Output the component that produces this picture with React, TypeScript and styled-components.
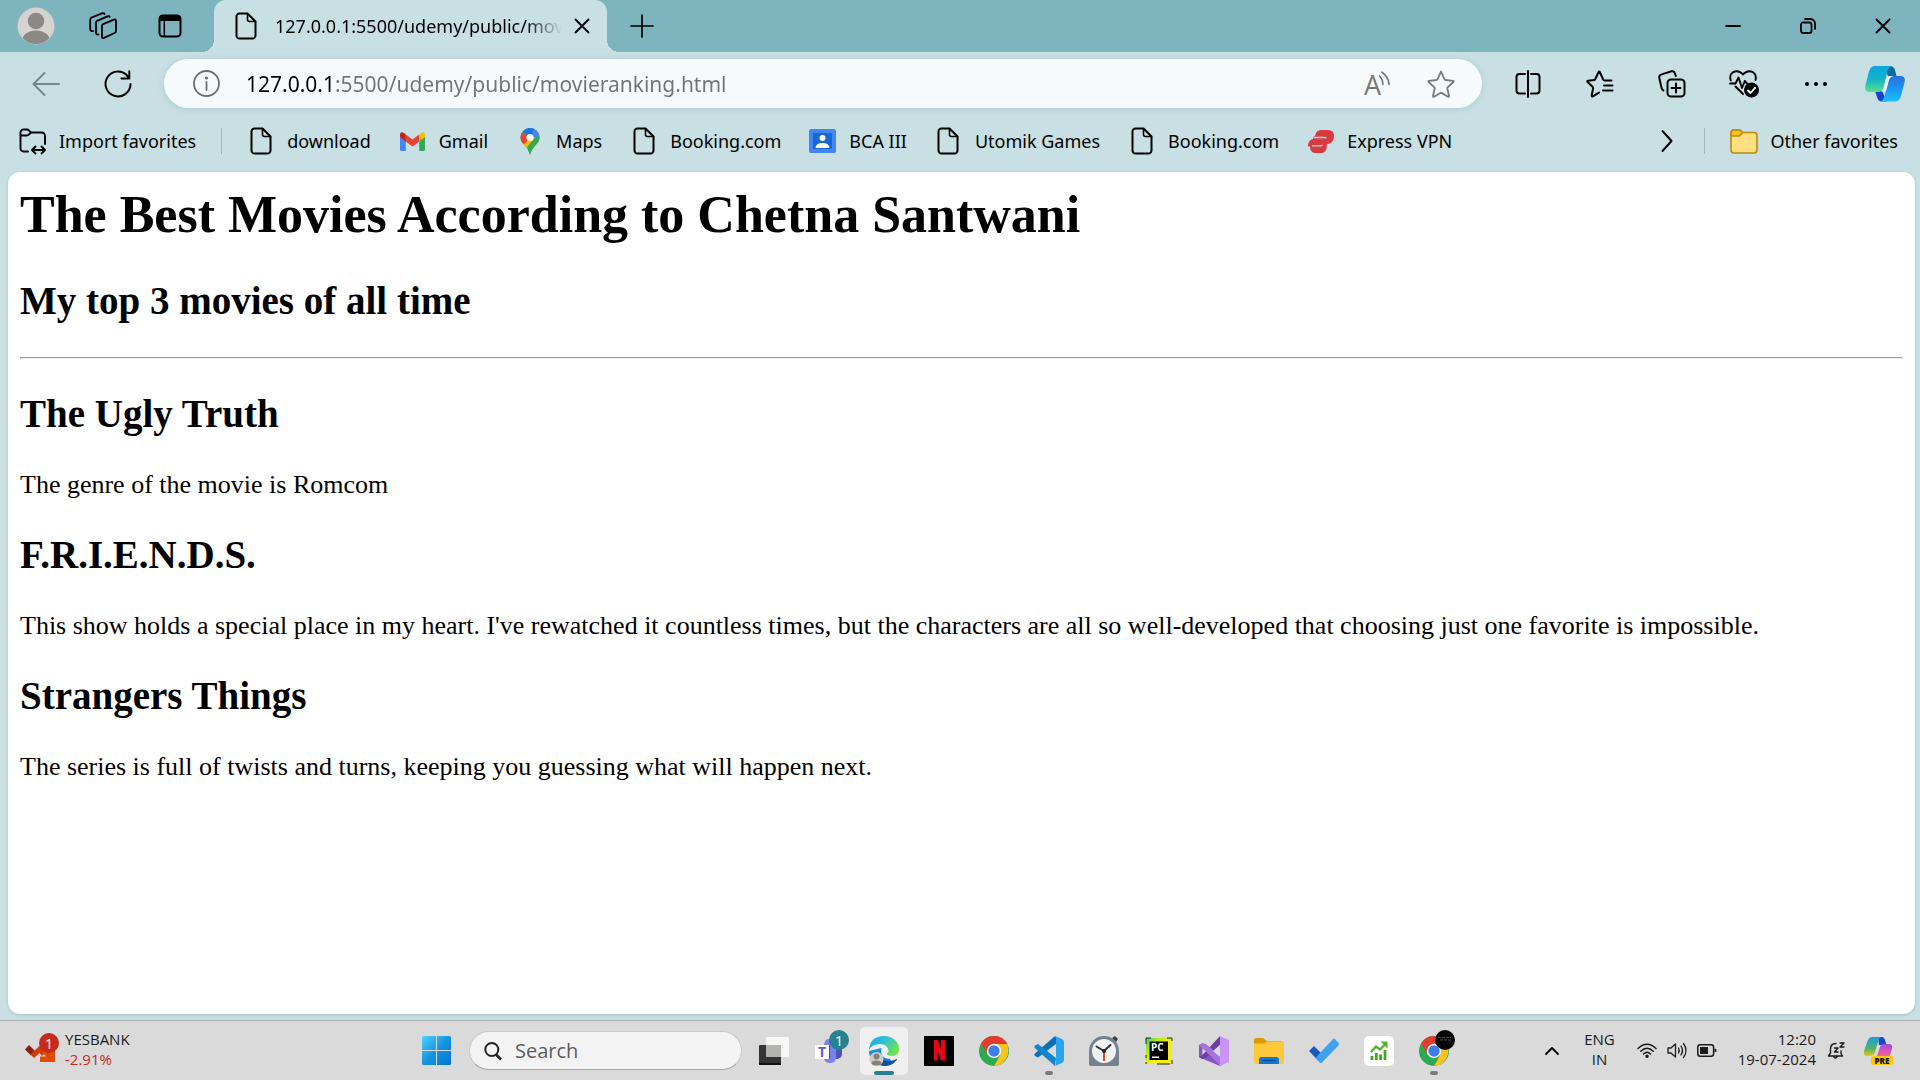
import React from "react";
import styled, { createGlobalStyle } from "styled-components";
import { RiNetflixFill } from "react-icons/ri";

const uiFont = `"Noto Sans", "Open Sans", sans-serif`;
const shellFont = `"Open Sans", "Noto Sans", sans-serif`;

const GlobalStyle = createGlobalStyle`
  *, *::before, *::after { box-sizing: border-box; }
  body { margin: 0; }
  svg { display: block; flex: none; overflow: visible; }
`;

/* ---------- shared ---------- */

const Desktop = styled.div`
  display: flex;
  flex-direction: column;
  min-height: 100vh;
  background: #c8dfe3;
  font-family: ${uiFont};
  color: #000;
`;

const IconButton = styled.button<{ $w: number; $color?: string }>`
  display: flex;
  align-items: center;
  justify-content: center;
  flex: none;
  align-self: stretch;
  width: ${(p) => p.$w}px;
  padding: 0;
  border: 0;
  background: none;
  color: ${(p) => p.$color ?? "#000"};
`;

/* ---------- tab strip ---------- */

const TabStrip = styled.header`
  display: flex;
  align-items: center;
  height: 52px;
  padding-left: 2px;
  background: #7eb4be;
`;

const Tab = styled.div`
  position: relative;
  display: flex;
  align-items: center;
  width: 393px;
  height: 52px;
  margin-left: 11px;
  padding: 0 4px 0 21px;
  border-radius: 12px 12px 0 0;
  background: #c8dfe3;

  &::before,
  &::after {
    content: "";
    position: absolute;
    bottom: 0;
    width: 12px;
    height: 12px;
  }
  &::before {
    left: -12px;
    background: radial-gradient(circle at 0 0, transparent 12px, #c8dfe3 12px);
  }
  &::after {
    right: -12px;
    background: radial-gradient(circle at 100% 0, transparent 12px, #c8dfe3 12px);
  }
`;

const TabTitle = styled.span`
  flex: 1;
  min-width: 0;
  margin-left: 18px;
  overflow: hidden;
  white-space: nowrap;
  font-size: 18px;
  line-height: 26px;
  mask-image: linear-gradient(to right, #000 250px, transparent 287px);
`;

const WindowControls = styled.div`
  display: flex;
  align-self: stretch;
  margin-left: auto;
`;

/* ---------- toolbar ---------- */

const Toolbar = styled.div`
  display: flex;
  align-items: center;
  height: 63px;
  padding: 0 2px 0 10px;
`;

const AddressBar = styled.div`
  display: flex;
  align-items: center;
  flex: 1;
  height: 49px;
  margin: 0 10px;
  padding: 0 9px 0 16px;
  border-radius: 25px;
  background: #f6fafb;
  box-shadow: 0 1px 6px #a9cbd1;
`;

const AddressInput = styled.input`
  flex: 1;
  min-width: 0;
  height: 32px;
  margin-left: 14px;
  padding: 0;
  border: 0;
  outline: 0;
  font-family: ${uiFont};
  font-size: 21px;
  line-height: 32px;
  color: transparent;
  background: linear-gradient(to right, #000 89px, #707476 89px);
  background-clip: text;
`;

/* ---------- favorites ---------- */

const FavoritesBar = styled.nav`
  display: flex;
  align-items: center;
  gap: 28px;
  height: 56px;
  padding: 0 22px 4px 19px;
`;

const Favorite = styled.a`
  display: flex;
  align-items: center;
  gap: 13px;
  color: #000;
  font-size: 18px;
  line-height: 26px;
  text-decoration: none;
  white-space: nowrap;
`;

const FavoriteIcon = styled.span`
  display: flex;
  justify-content: center;
  width: 27px;
`;

const Divider = styled.span`
  width: 1px;
  height: 26px;
  margin: 0 -3px;
  background: #9fb6ba;
`;

const FavoritesEnd = styled.div`
  display: flex;
  align-items: center;
  gap: 28px;
  margin-left: auto;
`;

/* ---------- web page ---------- */

const Page = styled.main`
  flex: 1;
  margin: 1px 5px 6px 8px;
  padding: 12px;
  border-radius: 12px;
  background: #fff;
  box-shadow: 0 1px 3px #a3c2c7;
  font-family: "Liberation Serif", "Times New Roman", serif;
`;

const Title = styled.h1`
  margin: 0 0 32px;
  font-size: 52px;
  line-height: 62px;
`;

const Heading = styled.h2`
  margin: 0 0 33px;
  font-size: 39px;
  line-height: 46px;
`;

const Rule = styled.hr`
  margin: 0 0 32px;
  border: 1px solid;
  border-color: #9a9a9a #eeeeee #eeeeee #9a9a9a;
`;

const Text = styled.p`
  margin: 0 0 32px;
  font-size: 26px;
  line-height: 30px;
`;

/* ---------- taskbar ---------- */

const Taskbar = styled.footer`
  display: grid;
  grid-template-columns: 1fr auto 1fr;
  height: 60px;
  border-top: 1px solid #a9afb0;
  background: #dadada;
  color: #1b1b1b;
  font-family: ${shellFont};
`;

const Widget = styled.button`
  display: flex;
  align-items: center;
  gap: 10px;
  padding: 0 0 0 25px;
  border: 0;
  background: none;
  color: inherit;
  font-family: inherit;
  text-align: left;
`;

const SmallLines = styled.span<{ $align?: string }>`
  display: flex;
  flex-direction: column;
  padding-bottom: 4px;
  font-size: 15px;
  line-height: 20px;
  text-align: ${(p) => p.$align ?? "left"};
`;

const Loss = styled.span`
  color: #c42b1c;
`;

const IconHolder = styled.span`
  position: relative;
  display: flex;
`;

const Badge = styled.span<{ $bg: string; $x: number; $y: number }>`
  position: absolute;
  left: ${(p) => p.$x}px;
  top: ${(p) => p.$y}px;
  width: 20px;
  height: 20px;
  border-radius: 50%;
  background: ${(p) => p.$bg};
  color: #fff;
  font-size: 15px;
  line-height: 20px;
  text-align: center;
`;

const Apps = styled.div`
  display: flex;
  align-items: center;
  padding-right: 50px;
`;

const SearchBox = styled.label`
  display: flex;
  align-items: center;
  gap: 13px;
  width: 273px;
  height: 39px;
  margin: 0 4px 0 5px;
  padding: 0 14px;
  border: 1px solid #c9c9c9;
  border-bottom-color: #a5a5a5;
  border-radius: 20px;
  background: #f3f3f3;
`;

const SearchInput = styled.input`
  flex: 1;
  min-width: 0;
  padding: 0;
  border: 0;
  outline: 0;
  background: none;
  font-family: inherit;
  font-size: 20px;
  line-height: 28px;

  &::placeholder {
    color: #5c5c5c;
    opacity: 1;
  }
`;

const AppButton = styled.button<{ $active?: boolean }>`
  position: relative;
  display: flex;
  align-items: center;
  justify-content: center;
  flex: none;
  width: 48px;
  height: 48px;
  margin: 0 3px 0 4px;
  padding: 0;
  border: 0;
  border-radius: 5px;
  background: ${(p) => (p.$active ? "#efefef" : "none")};
  font-family: inherit;
`;

const Running = styled.span<{ $active?: boolean }>`
  position: absolute;
  bottom: 0;
  width: ${(p) => (p.$active ? 20 : 8)}px;
  height: 4px;
  border-radius: 2px;
  background: ${(p) => (p.$active ? "#268290" : "#7b7b7b")};
`;

const NetflixTile = styled.span`
  display: flex;
  align-items: center;
  justify-content: center;
  width: 30px;
  height: 30px;
  background: #000;
  color: #e50914;
`;

const Tray = styled.div`
  display: flex;
  align-items: center;
  justify-content: flex-end;
  padding-right: 15px;
`;

const TrayText = styled.button`
  margin: 0 17px;
  padding: 0;
  border: 0;
  background: none;
  color: inherit;
  font-family: inherit;
`;

const Clock = styled(TrayText)`
  margin: 0 4px 0 16px;
`;

/* ---------- icons ---------- */

const line = (w: number) => ({
  fill: "none",
  stroke: "currentColor",
  strokeWidth: w,
  strokeLinecap: "round" as const,
  strokeLinejoin: "round" as const,
});

const Avatar = () => (
  <svg width="38" height="38" viewBox="0 0 38 38">
    <defs>
      <clipPath id="avatarClip"><circle cx="19" cy="19" r="18" /></clipPath>
    </defs>
    <circle cx="19" cy="19" r="18.5" fill="#d5d2cf" />
    <g clipPath="url(#avatarClip)" fill="#8c8886">
      <circle cx="19" cy="14" r="8.3" />
      <ellipse cx="19" cy="34" rx="14" ry="10.5" />
    </g>
  </svg>
);

const WorkspacesIcon = () => (
  <svg width="28" height="28" viewBox="0 0 28 28" {...line(1.8)}>
    <path d="M14 12.2 25 7.6Q27 7 27 9V19Q27 20.4 25.6 21L15 25.9Q13 26.6 13 24.6V14Q13 12.8 14 12.2Z" />
    <path d="M9.5 22.4Q7 23 7 20.6V10.6Q7 9.300 8.200 8.800L19 4.200Q20.300 3.800 20.800 4.800" />
    <path d="M4 19Q1.200 19.400 1.200 17V7.600Q1.200 6.200 2.400 5.600L13.500 1.200Q15 .8 15.600 2" />
  </svg>
);

const TabActionsIcon = () => (
  <svg width="24" height="24" viewBox="0 0 24 24">
    <rect x="1.500" y="1.500" width="21" height="21" rx="3.500" {...line(2)} />
    <path d="M1 7V4.500A3.500 3.500 0 0 1 4.500 1h15A3.500 3.500 0 0 1 23 4.500V7Z" />
    <path d="M6.300 7v15" {...line(1.500)} />
  </svg>
);

const FileIcon = () => (
  <svg width="22" height="28" viewBox="0 0 22 28" {...line(2)}>
    <path d="M4 1.500H12.500L20.500 9.500V23.500A3 3 0 0 1 17.500 26.500H4.500A3 3 0 0 1 1.500 23.500V4.500A3 3 0 0 1 4.500 1.500" />
    <path d="M12.500 1.500V7.500A2 2 0 0 0 14.500 9.500H20.500" strokeWidth="1.600" />
  </svg>
);

const CrossIcon = () => (
  <svg width="16" height="16" viewBox="0 0 16 16" {...line(1.900)}>
    <path d="M1.500 1.500 14.500 14.500M14.500 1.500 1.500 14.500" />
  </svg>
);

const PlusIcon = () => (
  <svg width="24" height="24" viewBox="0 0 24 24" {...line(1.700)}>
    <path d="M12 1V23M1 12H23" />
  </svg>
);

const MinimizeIcon = () => (
  <svg width="16" height="16" viewBox="0 0 16 16" {...line(1.800)}>
    <path d="M1 8H15" />
  </svg>
);

const RestoreIcon = () => (
  <svg width="16" height="16" viewBox="0 0 16 16" {...line(1.800)}>
    <rect x="1" y="4.500" width="10.500" height="10.500" rx="2" />
    <path d="M5 1H10.500A4.500 4.500 0 0 1 15 5.500V11" />
  </svg>
);

const BackIcon = () => (
  <svg width="28" height="24" viewBox="0 0 28 24" {...line(1.900)}>
    <path d="M27 12H1.500M12.500 1 1.500 12 12.500 23" />
  </svg>
);

const ReloadIcon = () => (
  <svg width="28" height="28" viewBox="0 0 28 28" {...line(2)}>
    <path d="M26.500 14A12.500 12.500 0 1 1 22.500 4.800L25 8.200M25.300 1.200V8.500H17.500" />
  </svg>
);

const InfoIcon = () => (
  <svg width="27" height="27" viewBox="0 0 27 27" {...line(1.800)}>
    <circle cx="13.500" cy="13.500" r="12.500" />
    <path d="M13.500 12V20" />
    <circle cx="13.500" cy="8" r=".7" />
  </svg>
);

const ReadAloudIcon = () => (
  <svg width="26" height="26" viewBox="0 0 26 26" {...line(1.700)}>
    <text x="0" y="24" fill="currentColor" stroke="none" fontFamily="Open Sans, sans-serif" fontWeight="400" fontSize="27">A</text>
    <path d="M15.500 5Q19 8.500 18.800 13.500M18 1.200Q24.800 6 25 13.500" />
  </svg>
);

const star = "M14 1.500 17.500 9.300Q17.800 9.900 18.500 10L26 10.800Q27.300 11 26.400 12L20.600 17.300Q20.200 17.700 20.300 18.300L22 26Q22.200 27.200 21 26.700L14.500 22.900Q14 22.600 13.500 22.900L7 26.700Q5.800 27.200 6 26L7.700 18.300Q7.800 17.700 7.400 17.300L1.600 12Q.7 11 2 10.800L9.500 10Q10.200 9.900 10.500 9.300Z";

const StarIcon = () => (
  <svg width="28" height="28" viewBox="0 0 28 28" {...line(1.800)}><path d={star} /></svg>
);

const SplitIcon = () => (
  <svg width="26" height="28" viewBox="0 0 26 28" {...line(2)}>
    <path d="M10 4H4.500A3 3 0 0 0 1.500 7V20.500A3 3 0 0 0 4.500 23.500H10M16 4H21.500A3 3 0 0 1 24.500 7V20.500A3 3 0 0 1 21.500 23.500H16M13 1V27" />
  </svg>
);

const FavoritesIcon = () => (
  <svg width="28" height="28" viewBox="0 0 28 28" {...line(2)}>
    <path d="M25.500 10.500H18.500Q17.600 10.400 17.200 9.600L13.800 2Q13.200 1 12.600 2L9.200 9.200Q9 9.800 8.300 9.900L2 10.700Q.7 11 1.600 12L6.800 17Q7.300 17.500 7.100 18.200L5.700 25.500Q5.600 26.900 6.800 26.300L13 22.600M18 15.500H26.500M17 20.500H26.500" />
  </svg>
);

const CollectionsIcon = () => (
  <svg width="28" height="28" viewBox="0 0 28 28" {...line(2)}>
    <rect x="9.500" y="9.500" width="17" height="17" rx="3.500" />
    <path d="M18 13.500V22.500M13.500 18H22.500M5.500 20.500Q4 20 3.600 18L1.300 8Q.8 5.500 3 4.600L13.500 1.300Q16 .8 16.800 3L17.800 6" />
  </svg>
);

const HeartIcon = () => (
  <svg width="30" height="28" viewBox="0 0 30 28" {...line(1.900)}>
    <path d="M1.800 10.500Q-.2 5 4 2.200Q9.500-.7 14 4.500Q18.500-.7 24 2.200Q28 5 26.500 10M1 13.500H6.500L9.500 7.500 13 18 15.800 11 18 13.500M6.500 16.500 14 24" />
    <circle cx="22.500" cy="20" r="7.500" fill="#000" stroke="none" />
    <path d="M19 20.500 21.500 23 26 17.800" stroke="#fff" />
  </svg>
);

const DotsIcon = () => (
  <svg width="24" height="6" viewBox="0 0 24 6" fill="currentColor">
    <circle cx="3" cy="3" r="2" /><circle cx="12" cy="3" r="2" /><circle cx="21" cy="3" r="2" />
  </svg>
);

const CopilotIcon = () => (
  <svg width="40" height="36" viewBox="0 0 40 36">
    <defs>
      <linearGradient id="cpA" x1="0" y1="0" x2="0" y2="1">
        <stop offset="0" stopColor="#0aa6e2" /><stop offset=".5" stopColor="#12b3c8" /><stop offset="1" stopColor="#5be08a" />
      </linearGradient>
      <linearGradient id="cpB" x1="0" y1="0" x2="0" y2="1">
        <stop offset="0" stopColor="#2870dc" /><stop offset=".6" stopColor="#1b9cf8" /><stop offset="1" stopColor="#19c3fb" />
      </linearGradient>
    </defs>
    <path d="M18 0H25Q28.500 0 30 4L31.500 10H23Z" fill="#0a6d97" />
    <path d="M10 25H17L22 35.500H17Q13 35.500 12 31Z" fill="#1244d6" />
    <path d="M10 0H27Q23.500 .5 22.500 5L19 20Q17.500 26 13 26H4Q-1 26 .5 19L4 5.500Q5.500 0 10 0Z" fill="url(#cpA)" />
    <path d="M30 35.500H15Q18 35 19.500 30L23.500 14Q25 10 28.500 10H36Q41 10 39.500 16.500L36 30Q34.500 35.500 30 35.500Z" fill="url(#cpB)" />
    <path d="M20.500 14Q22 10 27 10H28Q25 11 24 14L21.300 24Q20.500 26 16 25.500Q18.500 24 19 21Z" fill="#eef8fb" />
  </svg>
);

const ImportIcon = () => (
  <svg width="27" height="27" viewBox="0 0 27 27" {...line(1.900)}>
    <path d="M9 23.500H4.500A3 3 0 0 1 1.500 20.500V4.500A3 3 0 0 1 4.500 1.500H8Q9 1.500 9.800 2.300L12 4.500H22.500A3.500 3.500 0 0 1 26 8V16M1.500 7.500H7.500Q9 7.500 9.800 6.700L12 4.500M13 22H26M16.500 18.500 13 22 16.500 25.500M22.500 18.500 26 22 22.500 25.500" />
  </svg>
);

const GmailIcon = () => (
  <svg width="25" height="19" viewBox="0 0 25 19">
    <path d="M0 3V17.500A1.500 1.500 0 0 0 1.500 19H5.800V7.500Z" fill="#4285f4" />
    <path d="M25 3V17.500A1.500 1.500 0 0 1 23.500 19H19.200V7.500Z" fill="#34a853" />
    <path d="M5.800 2.500V9.500L12.500 14.500 19.200 9.500V2.500L12.500 7.500Z" fill="#ea4335" />
    <path d="M0 3.500V5L5.800 9.500V2.500L4 1Q0-1.200 0 3.500Z" fill="#c5221f" />
    <path d="M25 3.500V5L19.200 9.500V2.500L21 1Q25-1.200 25 3.500Z" fill="#fbbc04" />
  </svg>
);

const MapsIcon = () => (
  <svg width="20" height="27" viewBox="0 0 20 27">
    <defs>
      <clipPath id="pin"><path d="M10 0A9.500 9.500 0 0 1 19.500 9.500C19.500 16 12 18 10 27C8 18 .5 16 .5 9.500A9.500 9.500 0 0 1 10 0Z" /></clipPath>
    </defs>
    <g clipPath="url(#pin)">
      <rect width="20" height="27" fill="#34a853" />
      <path d="M0 18 14 1 20 8 6 24Z" fill="#fbbc04" />
      <path d="M10 27 20 16V4L7 19Z" fill="#34a853" />
      <path d="M0 3 10 10 2 18H0Z" fill="#ea4335" />
      <path d="M2 3 5 0H20L16 4 10 9.500Z" fill="#1a73e8" />
      <path d="M13 0 20 0V8L12 10Z" fill="#4285f4" />
    </g>
    <circle cx="10" cy="9.500" r="3.600" fill="#fff" />
  </svg>
);

const ClassIcon = () => (
  <svg width="27" height="24" viewBox="0 0 27 24">
    <rect width="27" height="24" rx="2" fill="#4285f4" />
    <rect x="4" y="4" width="19" height="16" fill="#1967d2" />
    <circle cx="13.500" cy="9" r="3" fill="#fff" />
    <path d="M6.500 19Q7 14 13.500 14T20.500 19Z" fill="#fff" />
  </svg>
);

const VpnIcon = () => (
  <svg width="26" height="23" viewBox="0 0 26 23">
    <path d="M7 6Q8 0 13 0H20Q26 0 26 6Q26 13 19 14Q18.500 18 18.500 19Q17 23 13 23H7Q2 23 2 16.500H0Q0 10 5 9L6 6Z" fill="#da3940" />
    <path d="M6 7.500H17Q18 7.500 18 8.500M4 15.800H13Q14 15.800 14.300 14.800" fill="none" stroke="#c8dfe3" strokeWidth="1.300" />
  </svg>
);

const ChevronRight = () => (
  <svg width="12" height="22" viewBox="0 0 12 22" {...line(2)}><path d="M1.500 1 10.500 11 1.500 21" /></svg>
);

const FolderIcon = () => (
  <svg width="28" height="25" viewBox="0 0 28 25" stroke="#b88a10" strokeWidth="1.600">
    <path d="M1 4A3 3 0 0 1 4 1H9Q10 1 11 2L13 3.500H24A3 3 0 0 1 27 6.500V21A3 3 0 0 1 24 24H4A3 3 0 0 1 1 21Z" fill="#ffdf80" />
    <path d="M1 4A3 3 0 0 1 4 1H9Q10 1 11 2L12.500 3.500 10.500 6Q9.800 7 8.500 7H1Z" fill="#f8c31c" />
  </svg>
);

const StockDownIcon = () => (
  <svg width="30" height="30" viewBox="0 0 30 30">
    <path d="M0 13.500 4 9 9.500 14.500 6 19.500Z" fill="#8a1f11" />
    <path d="M5.500 18.500 15.500 9 22 15 17 20 14.500 17 9 22Z" fill="#d83b01" />
    <path d="M30 11V26H15V20.500H21L17 16 23 10Z" fill="#e24a07" />
  </svg>
);

const WindowsIcon = () => (
  <svg width="29" height="29" viewBox="0 0 29 29">
    <defs>
      <linearGradient id="winG" x1="0" y1="0" x2="1" y2="1">
        <stop offset="0" stopColor="#4fd2fe" /><stop offset=".5" stopColor="#1594e2" /><stop offset="1" stopColor="#0173d3" />
      </linearGradient>
    </defs>
    <path d="M1.500 0H14V14H0V1.500A1.500 1.500 0 0 1 1.500 0ZM15 0H27.500A1.500 1.500 0 0 1 29 1.500V14H15ZM0 15H14V29H1.500A1.500 1.500 0 0 1 0 27.500ZM15 15H29V27.500A1.500 1.500 0 0 1 27.500 29H15Z" fill="url(#winG)" />
  </svg>
);

const SearchIcon = () => (
  <svg width="18" height="18" viewBox="0 0 18 18" fill="none" stroke="#222" strokeWidth="2">
    <circle cx="7.800" cy="7.500" r="6.500" /><path d="M12 12.500 17 17.500" strokeWidth="2.600" />
  </svg>
);

const TaskViewIcon = () => (
  <svg width="30" height="28" viewBox="0 0 30 28">
    <rect x="0" y="8" width="22" height="20" rx="1" fill="#343432" />
    <rect x="0" y="26" width="22" height="2" fill="#111" />
    <rect x="7" y="0" width="23" height="20" rx="1" fill="#f6f6f6" />
    <rect x="7" y="8" width="15" height="12" fill="#b3b3b1" />
  </svg>
);

const TeamsIcon = () => (
  <svg width="30" height="30" viewBox="0 0 30 30">
    <rect x="16" y="9" width="12" height="14" rx="5" fill="#4b53bc" />
    <rect x="10" y="4" width="12" height="23" rx="5" fill="#7b83eb" />
    <circle cx="15" cy="7" r="4" fill="#7b83eb" />
    <rect x="2" y="9" width="14" height="14" fill="#444aa8" />
    <rect x="1" y="9" width="14" height="14" fill="#fff" />
    <text x="8" y="21" textAnchor="middle" fontFamily="Open Sans, sans-serif" fontWeight="700" fontSize="14" fill="#5b5fc7">T</text>
  </svg>
);

const EdgeIcon = () => (
  <svg width="30" height="30" viewBox="0 0 30 30">
    <defs>
      <linearGradient id="edgeTop" x1="0" y1="0" x2="1" y2=".5">
        <stop offset="0" stopColor="#1ca5e0" /><stop offset=".5" stopColor="#2cc0dc" /><stop offset="1" stopColor="#6be449" />
      </linearGradient>
      <linearGradient id="edgeLeft" x1="0" y1="0" x2="0" y2="1">
        <stop offset="0" stopColor="#129bdc" /><stop offset="1" stopColor="#1175d3" />
      </linearGradient>
    </defs>
    <path d="M0 15A15 15 0 0 0 15 30Q20 30 24 27L12 12Z" fill="url(#edgeLeft)" />
    <path d="M11 16Q11 26 21 25Q25 24.500 27.500 23Q28.500 23 27.800 24Q23 30 15 30Q9 28 9 20Z" fill="#0c4d9c" />
    <path d="M12 16Q12 11.500 16 11Q20 11 20 15Q20 16 19 17Q19 21 23 22Q17 24 13.500 20Z" fill="#efefef" />
    <path d="M0 14Q1 0 15 0C24 0 30 6 30 13Q30 19 24 20Q18 20 18 17.500Q20 16 19.500 14Q18 8 11 8Q3 8 0 14Z" fill="url(#edgeTop)" />
    <circle cx="7.500" cy="23" r="7" fill="#cfcdca" />
    <circle cx="7.500" cy="20.500" r="3" fill="#85817e" />
    <ellipse cx="7.500" cy="27" rx="5" ry="2.500" fill="#85817e" />
  </svg>
);

const ChromeIcon = ({ badge }: { badge?: boolean }) => (
  <svg width="30" height="30" viewBox="0 0 30 30">
    <circle cx="15" cy="15" r="15" fill="#2da94f" />
    <path d="M15 8H28.300Q32 20 23 27.500Q19 30 15 30L21.500 18.500Z" fill="#fcc31e" />
    <path d="M2 7.500A15 15 0 0 1 28.300 8H15L9 18.500Z" fill="#e33b2e" />
    <circle cx="15" cy="15" r="7.200" fill="#fff" /><circle cx="15" cy="15" r="5.700" fill="#3b7ded" />
    {badge && (
      <g>
        <circle cx="26" cy="4" r="10" fill="#050505" />
        <path d="M19 1.500H32M21 4H33" stroke="#444" strokeWidth="1" strokeDasharray="3 1" />
      </g>
    )}
  </svg>
);

const CodeIcon = () => (
  <svg width="30" height="30" viewBox="0 0 30 30">
    <path d="M22 8 4 21.500 1 20Q-.5 18.800 1 17.500L21 0 22 1Z" fill="#0f6fb5" />
    <path d="M22 22 4 8 1 9.500Q-.5 11 1 12.300L21 30Z" fill="#1484cc" />
    <path d="M21 0 28 3Q30 4 30 6V24Q30 26 28 27L21 30Q22 29.500 22 27V3Q22 .5 21 0Z" fill="#28a3ec" />
  </svg>
);

const ClockIcon = () => (
  <svg width="30" height="30" viewBox="0 0 30 30">
    <path d="M0 15A15 15 0 0 1 30 15V28A2 2 0 0 1 28 30H2A2 2 0 0 1 0 28Z" fill="#74818e" />
    <path d="M23 2 26 0 29 3 27 6Z" fill="#3b4148" />
    <circle cx="15" cy="15" r="12" fill="#f0f1f2" />
    <path d="M15 15V25" stroke="#d83b01" strokeWidth="1.800" />
    <path d="M7.500 10.500 15 15 21.500 9" stroke="#333" strokeWidth="2" fill="none" strokeLinecap="round" />
    <circle cx="15" cy="15" r="2" fill="#222" />
  </svg>
);

const PyCharmIcon = () => (
  <svg width="26" height="26" viewBox="0 0 26 26">
    <defs>
      <linearGradient id="pyG" x1="0" y1="0" x2=".6" y2=".5">
        <stop offset="0" stopColor="#21d789" /><stop offset=".5" stopColor="#b9e712" /><stop offset="1" stopColor="#f2ee14" />
      </linearGradient>
    </defs>
    <rect width="26" height="26" fill="url(#pyG)" />
    <path d="M0 6V0H5M21 0H26V3M26 22V26M11 26H24M0 17V20M0 24V26" fill="none" stroke="#222" strokeWidth="1" />
    <rect x="3.500" y="3.500" width="18.500" height="18.500" fill="#000" />
    <text x="5" y="13" fontFamily="Open Sans, sans-serif" fontWeight="700" fontSize="10" fill="#fff">PC</text>
    <rect x="6" y="18.500" width="7" height="1.500" fill="#fff" />
  </svg>
);

const VisualStudioIcon = () => (
  <svg width="30" height="30" viewBox="0 0 30 30">
    <path d="M0 9 3 7.500 17 19 21 30 3 22.500 0 21Z" fill="#8457bd" />
    <path d="M3.500 11V19L8 15Z" fill="#dadada" />
    <path d="M21 0V9L7 22 3 23 0 21 3.500 19Z" fill="#6a3fa0" />
    <path d="M0 9 4 7 7 8 22 21V30Z" fill="#a473dc" />
    <path d="M21 0 30 4V26L21 30Z" fill="#c793f6" />
    <path d="M21 9V21L14 15Z" fill="#dadada" />
  </svg>
);

const ExplorerIcon = () => (
  <svg width="30" height="26" viewBox="0 0 30 26">
    <path d="M0 2A2 2 0 0 1 2 0H9L13 3H28V8H0Z" fill="#dd9a06" />
    <path d="M0 5.500H10L13 3.500H29A1 1 0 0 1 30 4.500V24A2 2 0 0 1 28 26H2A2 2 0 0 1 0 24Z" fill="#fdc93b" />
    <path d="M5 26V21.500A2.500 2.500 0 0 1 7.500 19H22.500A2.500 2.500 0 0 1 25 21.500V26Z" fill="#1277d2" />
    <path d="M8.500 22.500H21.500" stroke="#0a4a94" strokeWidth="1.400" />
  </svg>
);

const TodoIcon = () => (
  <svg width="30" height="26" viewBox="0 0 30 26">
    <path d="M0 13 5 8 12 15 11.500 25Z" fill="#185abd" />
    <path d="M6.500 20 24 1Q25 0 26 1L30 5.500Q30 7 29 8L13 24.500Q12 25.500 11 24.500Z" fill="#3fa2f0" />
  </svg>
);

const GrowthIcon = () => (
  <svg width="30" height="30" viewBox="0 0 30 30">
    <rect width="30" height="30" rx="5" fill="#fff" />
    <path d="M8 24V20M12.300 24V17M16.600 24V18.500M21 24V14" stroke="#3fa81d" strokeWidth="2.800" />
    <path d="M7 16 12 10.500 16 13.500 22 7.500" stroke="#4fb526" strokeWidth="2.400" fill="none" />
    <path d="M16.500 5.500H23.500V12.500Z" fill="#4fb526" />
  </svg>
);

const ChevronUp = () => (
  <svg width="14" height="8" viewBox="0 0 14 8" {...line(1.800)}><path d="M1 7 7 1 13 7" /></svg>
);

const WifiIcon = () => (
  <svg width="20" height="15" viewBox="0 0 20 15" {...line(1.500)}>
    <path d="M1 5.500Q10-3 19 5.500M3.800 8.300Q10 2 16.200 8.300M6.500 11Q10 7.300 13.500 11" />
    <circle cx="10" cy="13.300" r="1" fill="currentColor" />
  </svg>
);

const VolumeIcon = () => (
  <svg width="20" height="17" viewBox="0 0 20 17" {...line(1.300)}>
    <path d="M1 6V11H4L8.500 15V2L4 6ZM11.500 6Q13 8.500 11.500 11M14 4Q17 8.500 14 13M16.500 1.500Q21.500 8.500 16.500 15.500" />
  </svg>
);

const BatteryIcon = () => (
  <svg width="20" height="13" viewBox="0 0 20 13">
    <rect x=".8" y=".8" width="15.800" height="11.400" rx="2.500" {...line(1.500)} />
    <rect x="3" y="3" width="8" height="7" fill="currentColor" />
    <path d="M17.500 4.500 19.500 5.500V7.500L17.500 8.500Z" fill="currentColor" />
  </svg>
);

const BellIcon = () => (
  <svg width="18" height="18" viewBox="0 0 18 18" {...line(1.400)}>
    <path d="M9 1.500Q3.500 1.500 3.500 7V11L1.500 14H15.500L14 11.500V9M6.500 14.500Q8.300 17.500 10.300 14.500M7.500 6H11L7.500 10H11M13 1H17L13 5H17" />
  </svg>
);

const CopilotPreIcon = () => (
  <svg width="30" height="28" viewBox="0 0 30 28">
    <defs>
      <linearGradient id="preA" x1="0" y1="0" x2="0" y2="1">
        <stop offset="0" stopColor="#1d9be6" /><stop offset=".6" stopColor="#4fb36b" /><stop offset="1" stopColor="#f0c51a" />
      </linearGradient>
      <linearGradient id="preB" x1="0" y1="0" x2="0" y2="1">
        <stop offset="0" stopColor="#a04be8" /><stop offset=".7" stopColor="#ed5aa0" /><stop offset="1" stopColor="#f77a5c" />
      </linearGradient>
    </defs>
    <path d="M14 0H18Q20 0 21 3L22.500 8H15Z" fill="#1749c4" />
    <path d="M8 0H17Q15 1 14 5L11 15Q10 19 6 19H3Q-1 19 0 14L3.500 4Q5 0 8 0Z" fill="url(#preA)" />
    <path d="M10 21Q13 20 14 16L16 10Q17 7 20 7H25Q29 7 28 12L26 18Q25 21 22 21Z" fill="url(#preB)" />
    <rect x="7" y="19" width="22" height="9" rx="2" fill="#fdc60b" />
    <text x="18" y="27" textAnchor="middle" fontFamily="Open Sans, sans-serif" fontWeight="800" fontSize="8" fill="#111">PRE</text>
  </svg>
);

/* ---------- data ---------- */

const favorites: { label: string; icon: React.ReactNode }[] = [
  { label: "download", icon: <FileIcon /> },
  { label: "Gmail", icon: <GmailIcon /> },
  { label: "Maps", icon: <MapsIcon /> },
  { label: "Booking.com", icon: <FileIcon /> },
  { label: "BCA III", icon: <ClassIcon /> },
  { label: "Utomik Games", icon: <FileIcon /> },
  { label: "Booking.com", icon: <FileIcon /> },
  { label: "Express VPN", icon: <VpnIcon /> },
];

const movies = [
  { title: "The Ugly Truth", text: "The genre of the movie is Romcom" },
  {
    title: "F.R.I.E.N.D.S.",
    text: "This show holds a special place in my heart. I've rewatched it countless times, but the characters are all so well-developed that choosing just one favorite is impossible.",
  },
  { title: "Strangers Things", text: "The series is full of twists and turns, keeping you guessing what will happen next." },
];

const apps: { name: string; icon: React.ReactNode; active?: boolean; running?: boolean }[] = [
  { name: "Task view", icon: <TaskViewIcon /> },
  {
    name: "Teams",
    icon: (
      <IconHolder>
        <TeamsIcon />
        <Badge $bg="#268290" $x={15} $y={-6}>1</Badge>
      </IconHolder>
    ),
  },
  { name: "Edge", icon: <EdgeIcon />, active: true, running: true },
  { name: "Netflix", icon: <NetflixTile><RiNetflixFill size={23} /></NetflixTile> },
  { name: "Chrome", icon: <ChromeIcon /> },
  { name: "Visual Studio Code", icon: <CodeIcon />, running: true },
  { name: "Clock", icon: <ClockIcon /> },
  { name: "PyCharm", icon: <PyCharmIcon /> },
  { name: "Visual Studio", icon: <VisualStudioIcon /> },
  { name: "File Explorer", icon: <ExplorerIcon /> },
  { name: "To Do", icon: <TodoIcon /> },
  { name: "Stocks", icon: <GrowthIcon /> },
  { name: "Chrome profile", icon: <ChromeIcon badge />, running: true },
];

export default function App() {
  return (
    <Desktop>
      <GlobalStyle />
      <TabStrip>
        <IconButton $w={67} aria-label="Profile"><Avatar /></IconButton>
        <IconButton $w={67} aria-label="Workspaces"><WorkspacesIcon /></IconButton>
        <IconButton $w={67} aria-label="Tab actions"><TabActionsIcon /></IconButton>
        <Tab>
          <FileIcon />
          <TabTitle>127.0.0.1:5500/udemy/public/movieranking.html</TabTitle>
          <IconButton $w={42} aria-label="Close tab"><CrossIcon /></IconButton>
        </Tab>
        <IconButton $w={70} aria-label="New tab"><PlusIcon /></IconButton>
        <WindowControls>
          <IconButton $w={75} aria-label="Minimize"><MinimizeIcon /></IconButton>
          <IconButton $w={75} aria-label="Restore"><RestoreIcon /></IconButton>
          <IconButton $w={75} aria-label="Close"><CrossIcon /></IconButton>
        </WindowControls>
      </TabStrip>

      <Toolbar>
        <IconButton $w={72} $color="#76868a" aria-label="Back"><BackIcon /></IconButton>
        <IconButton $w={72} aria-label="Refresh"><ReloadIcon /></IconButton>
        <AddressBar>
          <IconButton $w={52} $color="#6b6f70" aria-label="Site information"><InfoIcon /></IconButton>
          <AddressInput aria-label="Address" defaultValue="127.0.0.1:5500/udemy/public/movieranking.html" />
          <IconButton $w={64} $color="#767a7b" aria-label="Read aloud"><ReadAloudIcon /></IconButton>
          <IconButton $w={64} $color="#767a7b" aria-label="Add to favorites"><StarIcon /></IconButton>
        </AddressBar>
        <IconButton $w={72} aria-label="Split screen"><SplitIcon /></IconButton>
        <IconButton $w={72} aria-label="Favorites"><FavoritesIcon /></IconButton>
        <IconButton $w={72} aria-label="Collections"><CollectionsIcon /></IconButton>
        <IconButton $w={72} aria-label="Browser essentials"><HeartIcon /></IconButton>
        <IconButton $w={72} aria-label="Settings and more"><DotsIcon /></IconButton>
        <IconButton $w={66} aria-label="Copilot"><CopilotIcon /></IconButton>
      </Toolbar>

      <FavoritesBar aria-label="Favorites">
        <Favorite href="#import"><FavoriteIcon><ImportIcon /></FavoriteIcon>Import favorites</Favorite>
        <Divider />
        {favorites.map((f, i) => (
          <Favorite key={i} href="#favorite"><FavoriteIcon>{f.icon}</FavoriteIcon>{f.label}</Favorite>
        ))}
        <FavoritesEnd>
          <IconButton $w={24} aria-label="More favorites"><ChevronRight /></IconButton>
          <Divider />
          <Favorite href="#other"><FavoriteIcon><FolderIcon /></FavoriteIcon>Other favorites</Favorite>
        </FavoritesEnd>
      </FavoritesBar>

      <Page>
        <Title>The Best Movies According to Chetna Santwani</Title>
        <Heading>My top 3 movies of all time</Heading>
        <Rule />
        {movies.map((m) => (
          <section key={m.title}>
            <Heading>{m.title}</Heading>
            <Text>{m.text}</Text>
          </section>
        ))}
      </Page>

      <Taskbar>
        <Widget>
          <IconHolder>
            <StockDownIcon />
            <Badge $bg="#c42b1c" $x={14} $y={-3}>1</Badge>
          </IconHolder>
          <SmallLines>
            <span>YESBANK</span>
            <Loss>-2.91%</Loss>
          </SmallLines>
        </Widget>
        <Apps>
          <IconButton $w={55} aria-label="Start"><WindowsIcon /></IconButton>
          <SearchBox>
            <SearchIcon />
            <SearchInput aria-label="Search" placeholder="Search" />
          </SearchBox>
          {apps.map((a) => (
            <AppButton key={a.name} $active={a.active} aria-label={a.name}>
              {a.icon}
              {a.running && <Running $active={a.active} />}
            </AppButton>
          ))}
        </Apps>
        <Tray>
          <IconButton $w={30} aria-label="Hidden icons"><ChevronUp /></IconButton>
          <TrayText><SmallLines $align="center"><span>ENG</span><span>IN</span></SmallLines></TrayText>
          <IconButton $w={30} $color="#1b1b1b" aria-label="Wi-Fi"><WifiIcon /></IconButton>
          <IconButton $w={30} $color="#1b1b1b" aria-label="Volume"><VolumeIcon /></IconButton>
          <IconButton $w={30} $color="#1b1b1b" aria-label="Battery"><BatteryIcon /></IconButton>
          <Clock><SmallLines $align="right"><span>12:20</span><span>19-07-2024</span></SmallLines></Clock>
          <IconButton $w={32} $color="#1b1b1b" aria-label="Notifications"><BellIcon /></IconButton>
          <IconButton $w={53} aria-label="Copilot preview"><CopilotPreIcon /></IconButton>
        </Tray>
      </Taskbar>
    </Desktop>
  );
}
